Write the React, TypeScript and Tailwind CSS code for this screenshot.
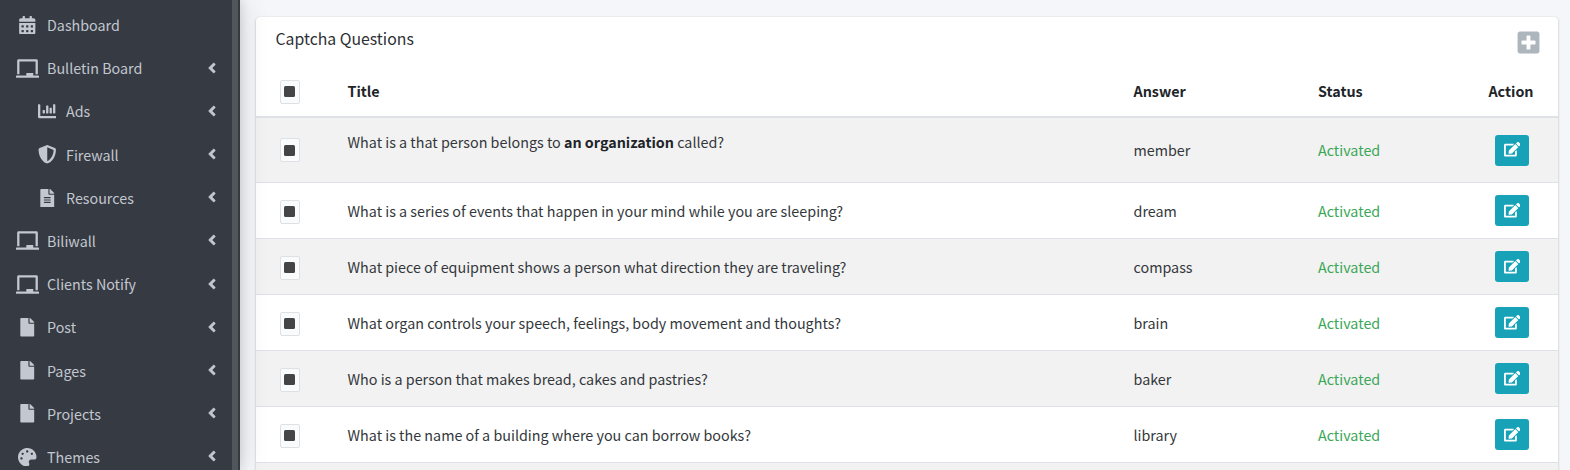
import type { ReactNode } from 'react';
import type { IconType } from 'react-icons';
import {
  FaAngleLeft,
  FaCalendarAlt,
  FaChalkboard,
  FaChartBar,
  FaEdit,
  FaFile,
  FaFileAlt,
  FaPalette,
  FaPlusSquare,
  FaShieldAlt,
} from 'react-icons/fa';

type NavItem = { label: string; icon: IconType; child?: boolean; leaf?: boolean };

const navItems: NavItem[] = [
  { label: 'Dashboard', icon: FaCalendarAlt, leaf: true },
  { label: 'Bulletin Board', icon: FaChalkboard },
  { label: 'Ads', icon: FaChartBar, child: true },
  { label: 'Firewall', icon: FaShieldAlt, child: true },
  { label: 'Resources', icon: FaFileAlt, child: true },
  { label: 'Biliwall', icon: FaChalkboard },
  { label: 'Clients Notify', icon: FaChalkboard },
  { label: 'Post', icon: FaFile },
  { label: 'Pages', icon: FaFile },
  { label: 'Projects', icon: FaFile },
  { label: 'Themes', icon: FaPalette },
];

type Question = { title: ReactNode; answer: string; tall?: boolean };

const questions: Question[] = [
  {
    title: (
      <>
        What is a that person belongs to <b className="font-bold text-[#212529]">an organization</b> called?
      </>
    ),
    answer: 'member',
    tall: true,
  },
  { title: 'What is a series of events that happen in your mind while you are sleeping?', answer: 'dream' },
  { title: 'What piece of equipment shows a person what direction they are traveling?', answer: 'compass' },
  { title: 'What organ controls your speech, feelings, body movement and thoughts?', answer: 'brain' },
  { title: 'Who is a person that makes bread, cakes and pastries?', answer: 'baker' },
  { title: 'What is the name of a building where you can borrow books?', answer: 'library' },
];

const columns = 'grid grid-cols-[91.5px_786px_184.5px_1fr_92px] items-center';

function Check() {
  return (
    <span className="ml-6 flex h-6 w-5 items-center justify-center rounded-[2px] border border-[#dde1e5] bg-[#fafbfc]">
      <span className="mr-[0.5px] size-[11px] rounded-[1.5px] bg-[#444]" />
    </span>
  );
}

function Sidebar() {
  return (
    <aside className="relative z-10 flex w-60 shrink-0 bg-[#343a40] shadow-[0_0_28px_rgba(0,0,0,0.14),0_0_10px_rgba(0,0,0,0.13)]">
      <nav className="flex w-[232px] flex-col gap-[3.2px] bg-[#363a42] pt-[5px] text-[14.3px] text-[#c2c7d0]">
        {navItems.map(({ label, icon: Icon, child, leaf }) => (
          <a key={label} className={`flex h-10 shrink-0 items-center pr-3 ${child ? 'pl-[33px]' : 'pl-[13px]'}`}>
            <span className={`flex justify-center ${child ? 'w-[28px]' : 'w-[29px]'}`}>
              <Icon className={Icon === FaChalkboard ? 'h-[19px] w-[23px]' : 'size-[18.5px]'} />
            </span>
            <span className="ml-[5px] flex-1 whitespace-nowrap">{label}</span>
            {!leaf && <FaAngleLeft className="mt-[-1px] size-4 stroke-[#c2c7d0] stroke-[18px]" />}
          </a>
        ))}
      </nav>
      <div className="w-1.5 bg-[#50565c]" />
    </aside>
  );
}

export default function App() {
  return (
    <div className="flex h-[470px] overflow-hidden bg-[#f4f6f9] font-['Noto_Sans_CJK_SC',sans-serif] text-[14.33px] leading-6 text-[#212529]">
      <Sidebar />
      <main className="h-full flex-1 pt-[17px] pr-3 pl-4">
        <section className="h-[600px] rounded bg-white shadow-[0_0_1px_rgba(0,0,0,0.125),0_1px_3px_rgba(0,0,0,0.2)]">
          <header className="flex h-[49px] items-start justify-between pr-[17px] pl-[19.5px]">
            <h3 className="pt-2.5 text-[15.8px] text-[#2c3034]">Captcha Questions</h3>
            <FaPlusSquare className="mt-[12.5px] size-[25px] text-[#adb5bd]" />
          </header>
          <div className={`${columns} h-[52px] border-b-2 border-[#dee2e6] font-bold`}>
            <div className="pt-px">
              <Check />
            </div>
            <span>Title</span>
            <span>Answer</span>
            <span>Status</span>
            <span className="pr-0.5 text-center">Action</span>
          </div>
          {questions.map(({ title, answer, tall }, i) => (
            <div
              key={answer}
              className={`${columns} ${tall ? 'h-[65px]' : 'h-14'} border-b border-[#dee2e6] text-[#33373b] ${i % 2 ? 'bg-white' : 'bg-[#f2f2f2]'}`}
            >
              <div className={tall ? 'pt-0' : 'pt-0.5'}>
                <Check />
              </div>
              <span className={tall ? 'pb-4' : ''}>{title}</span>
              <span>{answer}</span>
              <span className="text-[#3aa757]">Activated</span>
              <button className="flex h-[31px] w-[34px] items-center justify-center justify-self-center rounded-[3px] bg-[#17a2b8] pb-px text-white">
                <FaEdit className="size-[16.5px]" />
              </button>
            </div>
          ))}
          <div className="h-14 bg-[#f2f2f2]" />
        </section>
      </main>
    </div>
  );
}
